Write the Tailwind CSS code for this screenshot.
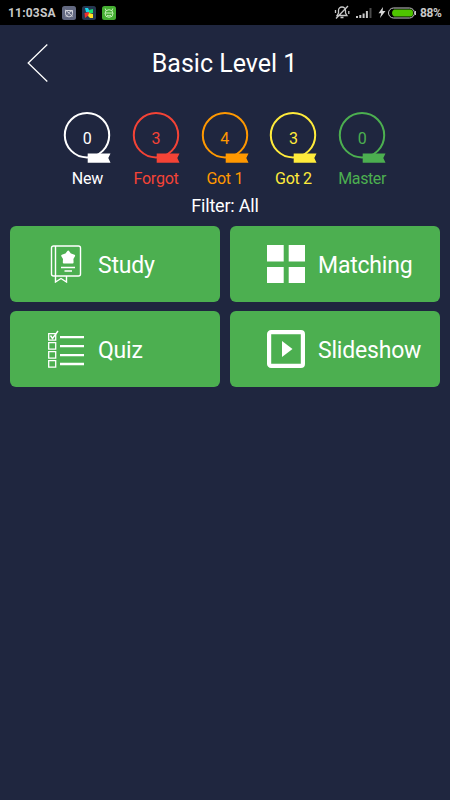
<!DOCTYPE html>
<html lang="en">
<head>
<meta charset="utf-8">
<title>Basic Level 1</title>
<script src="https://cdn.jsdelivr.net/npm/@tailwindcss/browser@4"></script>
</head>
<body class="w-[450px] h-[800px] overflow-hidden bg-[#1f263f] text-white font-['Roboto',sans-serif]">
<!-- Status bar -->
<div class="h-[25px] bg-black flex items-center pl-[8px] pr-[8px] text-[#c8c8c8]">
  <span class="text-[12px] leading-[23px] pt-[2px] font-bold w-[54px] whitespace-nowrap tracking-[0.2px]">11:03SA</span>
  <svg class="w-[14px] h-[14px] mt-px" viewBox="0 0 14 14"><rect width="14" height="14" rx="2.5" fill="#626880"/><path d="M3.5 4.5h7v3.2a3.5 3.2 0 0 1-7 0zM3.5 4l7 6.5M4 10.5l2-2M6 7l4.5-2.5" fill="none" stroke="#d4d5dc"/></svg>
  <svg class="w-[14px] h-[14px] mt-px ml-[6px]" viewBox="0 0 14 14"><rect width="14" height="14" rx="2.5" fill="#263852"/><path d="M3 2h3l1 2 1 3-4-1z" fill="#16d8ee"/><path d="M7 4l4-1v4H7z" fill="#18df70"/><path d="M2.500 7L7 6v3l-4 3z" fill="#ed3030"/><path d="M7 7l4 1v4H8l-2-2z" fill="#ffdf22"/></svg>
  <svg class="w-[14px] h-[14px] mt-px ml-[6px]" viewBox="0 0 14 14"><rect width="14" height="14" rx="2.500" fill="#45ae32"/><path d="M4 4.500L3.200 2.500M10 4.500l.8-2M3 7.500a4 3.800 0 0 1 8 0 4 3.800 0 0 1-8 0zM3 7h8M5 9.300q2 1.200 4 0" fill="none" stroke="#c5f2b9"/></svg>
  <span class="flex-1"></span>
  <svg class="w-[16px] h-[15px] mr-[1px]" viewBox="0 0 16 15" fill="none" stroke="#c8c8c8" stroke-width="1.300"><path d="M3 10.500h10L11.500 8V5.500a3.500 3.500 0 0 0-7 0V8zM6.500 12.500h3M14 1L2 13.500M1.500 5v3M14.800 6v3"/></svg>
  <svg class="w-[17px] h-[12px] ml-[5px]" viewBox="0 0 17 12"><path d="M0 9h2v2H0zM3.300 8h2v3h-2zM6.600 6.500h2V11h-2zM9.900 4h2v7h-2z" fill="#c8c8c8"/><path d="M13.500 1h2v10h-2z" fill="#4b4b4b"/></svg>
  <svg class="w-[8px] h-[13px] ml-[5px]" viewBox="0 0 8 13"><path d="M5 1L.5 7.300h2.700L2 12l5.500-7H4.600z" fill="#d8d8d8"/></svg>
  <svg class="w-[30px] h-[12px] ml-[1px] mr-[3px]" viewBox="0 0 30 12"><rect x="1.500" y="1" width="26" height="10" rx="5" fill="#000" stroke="#c8c8c8"/><path d="M28.500 4v4" stroke="#c8c8c8"/><path d="M7 2.500h17q2 0 2 3.500t-2 3.500H7q-2-1-2-3.500t2-3.500z" fill="#4fc400"/></svg>
  <span class="text-[12px] leading-[23px] pt-[2px] font-bold w-[22px] whitespace-nowrap tracking-[-0.4px]">88%</span>
</div>

<!-- Header -->
<header class="h-[75px] grid grid-cols-[75px_1fr_76px] items-center">
  <svg class="w-[22px] h-[40px] ml-[27px]" viewBox="0 0 22 40"><path d="M20.300 1.500L1.200 20l19.100 18.500" fill="none" stroke="#fff" stroke-width="1.300"/></svg>
  <h1 class="text-[25px] leading-[30px] pt-[2px] text-center whitespace-nowrap">Basic Level 1</h1>
</header>

<!-- Card counts -->
<svg class="hidden"><symbol id="ring" viewBox="0 0 48 54"><circle cx="24" cy="25.200" r="22.200" fill="none" stroke="currentColor" stroke-width="2"/><path d="M24.700 43.500H47.500L45.300 48.100 47.500 52.700H24.700z" fill="currentColor"/></symbol></svg>
<section class="mt-[10px] ml-[53px] w-[343.500px] h-[80px] grid grid-cols-5 text-[16px]">
  <div class="flex flex-col items-center text-white"><div class="grid place-items-center w-[48px] h-[54px]"><svg class="col-start-1 row-start-1 w-[48px] h-[54px]"><use href="#ring"/></svg><span class="col-start-1 row-start-1 leading-[20px] mt-[3px]">0</span></div><span class="mt-[5px] leading-[20px] tracking-[-0.2px]">New</span></div>
  <div class="flex flex-col items-center text-[#f44336]"><div class="grid place-items-center w-[48px] h-[54px]"><svg class="col-start-1 row-start-1 w-[48px] h-[54px]"><use href="#ring"/></svg><span class="col-start-1 row-start-1 leading-[20px] mt-[3px]">3</span></div><span class="mt-[5px] leading-[20px] tracking-[-0.2px]">Forgot</span></div>
  <div class="flex flex-col items-center text-[#ff9800]"><div class="grid place-items-center w-[48px] h-[54px]"><svg class="col-start-1 row-start-1 w-[48px] h-[54px]"><use href="#ring"/></svg><span class="col-start-1 row-start-1 leading-[20px] mt-[3px]">4</span></div><span class="mt-[5px] leading-[20px] tracking-[-0.3px]">Got 1</span></div>
  <div class="flex flex-col items-center text-[#ffeb3b]"><div class="grid place-items-center w-[48px] h-[54px]"><svg class="col-start-1 row-start-1 w-[48px] h-[54px]"><use href="#ring"/></svg><span class="col-start-1 row-start-1 leading-[20px] mt-[3px]">3</span></div><span class="mt-[5px] leading-[20px] tracking-[-0.3px]">Got 2</span></div>
  <div class="flex flex-col items-center text-[#4caf50]"><div class="grid place-items-center w-[48px] h-[54px]"><svg class="col-start-1 row-start-1 w-[48px] h-[54px]"><use href="#ring"/></svg><span class="col-start-1 row-start-1 leading-[20px] mt-[3px]">0</span></div><span class="mt-[5px] leading-[20px] tracking-[-0.4px]">Master</span></div>
</section>
<p class="mt-[4px] text-center text-[18px] leading-[24px] tracking-[-0.2px]">Filter: All</p>

<!-- Study modes -->
<main class="mt-[8px] px-[10px] grid grid-cols-2 gap-x-[10px] gap-y-[9px] text-[23px] tracking-[-0.2px]">
  <button class="h-[76px] rounded-[6px] bg-[#4caf50] flex items-center pl-[37px]">
    <svg class="w-[38px] h-[38px]" viewBox="0 0 38 38" fill="none" stroke="#fff" stroke-width="1.400"><path d="M8.500 31H6.500a2 2 0 0 1-2-2V3a2 2 0 0 1 2-2h25a2 2 0 0 1 2 2v26a2 2 0 0 1-2 2H20M8.500 1v36l5.500-3.500 5.500 3.500v-6H8.500M14 22.500h14M17.500 26h7.500"/><path d="M21.200 6.500l1.900 2.700 4 1.600-1.700 3 .2 3.700H16.800l.2-3.700-1.800-3 4.100-1.600z" fill="#fff" stroke-width="2" stroke-linejoin="round"/></svg>
    <span class="ml-[13px] pt-[5px]">Study</span>
  </button>
  <button class="h-[76px] rounded-[6px] bg-[#4caf50] flex items-center pl-[37px]">
    <svg class="w-[38px] h-[38px]" viewBox="0 0 38 38" fill="#fff"><path d="M0 0h16.700v16.500H0zM21.700 0H38v16.500H21.700zM0 22h16.700v16H0zM21.700 22H38v16H21.700z"/></svg>
    <span class="ml-[13px] pt-[5px]">Matching</span>
  </button>
  <button class="h-[76px] rounded-[6px] bg-[#4caf50] flex items-center pl-[37px]">
    <svg class="w-[38px] h-[38px]" viewBox="0 0 38 38" fill="none" stroke="#fff"><path d="M1.700 3.700h7v6.500h-7zM1.700 12.700h7v6.500h-7zM1.700 21.700h7v6.500h-7zM1.700 30.700h7v6.500h-7z" stroke-width="1.300"/><path d="M3.500 5.500l2 3L11 1" stroke-width="1.400"/><path d="M13 7.200h24M13 16.200h24M13 25.200h24M13 34h24" stroke-width="2.300"/></svg>
    <span class="ml-[13px] pt-[5px]">Quiz</span>
  </button>
  <button class="h-[76px] rounded-[6px] bg-[#4caf50] flex items-center pl-[37px]">
    <svg class="w-[38px] h-[38px]" viewBox="0 0 38 38"><rect x="2.100" y="2.100" width="33.800" height="33.800" rx="2" fill="none" stroke="#fff" stroke-width="4.200"/><path d="M15 11v16l10.500-8z" fill="#fff"/></svg>
    <span class="ml-[13px] pt-[5px]">Slideshow</span>
  </button>
</main>
</body>
</html>
